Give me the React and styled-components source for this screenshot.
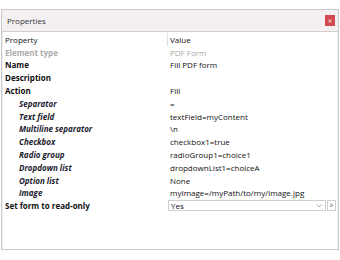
import React from 'react';
import styled, { createGlobalStyle } from 'styled-components';

const GlobalStyle = createGlobalStyle`
  body {
    margin: 0;
    background: #ffffff;
    font-family: "Open Sans", "Noto Sans", sans-serif;
  }
`;

const Window = styled.div`
  margin: 9px 0 0 1px;
  width: 338px;
  height: 241px;
  box-sizing: border-box;
  border: 1px solid #c9c9c9;
  display: flex;
  flex-direction: column;
  background: #f4f0f2;
`;

const TitleBar = styled.div`
  height: 21px;
  display: flex;
  align-items: center;
  justify-content: space-between;
  padding: 0 3px 0 5px;
  border-bottom: 1px solid #d4d0d2;
`;

const Title = styled.span`
  font-size: 8px;
  color: #333;
`;

const CloseButton = styled.button`
  width: 10px;
  height: 11px;
  padding: 0;
  border: none;
  background: #d24a4f;
  color: #fff;
  font-size: 6px;
  line-height: 11px;
  font-family: "DejaVu Sans", sans-serif;
`;

const Grid = styled.div`
  flex: 1;
  background: #fff;
  margin: 0 1px;
  padding-top: 1px;
  display: grid;
  grid-template-columns: 164px 1fr;
  grid-auto-rows: 12.8px;
  align-content: start;
`;

const Cell = styled.div`
  display: flex;
  align-items: center;
  font-size: 8px;
  white-space: nowrap;
  overflow: hidden;
  color: ${({ $muted }) => ($muted ? '#a9a9a9' : '#111')};
`;

const LabelCell = styled(Cell)`
  padding-left: ${({ $sub }) => ($sub ? '16px' : '2px')};
  font-weight: ${({ $header }) => ($header ? 400 : 700)};
  font-style: ${({ $sub }) => ($sub ? 'italic' : 'normal')};
  color: ${({ $muted, $sub }) => ($muted ? '#ababab' : $sub ? '#1c1c30' : '#111')};
`;

const ValueCell = styled(Cell)`
  padding-left: ${({ $control }) => ($control ? '0' : '2px')};
  border-left: ${({ $header }) => ($header ? '1px solid #e2e2e2' : '1px solid transparent')};
`;

const SelectRow = styled.div`
  display: flex;
  align-items: center;
  gap: 1px;
  width: 168px;
`;

const Select = styled.div`
  flex: 1;
  height: 11px;
  box-sizing: border-box;
  border: 1px solid #cfcfcf;
  display: flex;
  align-items: center;
  justify-content: space-between;
  padding: 0 3px 0 2px;
  font-size: 8px;
  color: #111;
`;

const NextButton = styled.div`
  width: 9px;
  height: 11px;
  box-sizing: border-box;
  border: 1px solid #cfcfcf;
  font-size: 7px;
  line-height: 9px;
  text-align: center;
  color: #444;
`;

const Chevron = () => (
  <svg width="6" height="4" viewBox="0 0 6 4">
    <path d="M0.5 0.5 L3 3 L5.5 0.5" fill="none" stroke="#999" strokeWidth="0.8" />
  </svg>
);

const rows = [
  { label: 'Element type', value: 'PDF Form', muted: true },
  { label: 'Name', value: 'Fill PDF form' },
  { label: 'Description', value: '' },
  { label: 'Action', value: 'Fill' },
  { label: 'Separator', value: '=', sub: true },
  { label: 'Text field', value: 'textField=myContent', sub: true },
  { label: 'Multiline separator', value: '\\n', sub: true },
  { label: 'Checkbox', value: 'checkbox1=true', sub: true },
  { label: 'Radio group', value: 'radioGroup1=choice1', sub: true },
  { label: 'Dropdown list', value: 'dropdownList1=choiceA', sub: true },
  { label: 'Option list', value: 'None', sub: true },
  { label: 'Image', value: 'myImage=/myPath/to/my/image.jpg', sub: true },
];

export default function App() {
  return (
    <>
      <GlobalStyle />
      <Window>
        <TitleBar>
          <Title>Properties</Title>
          <CloseButton>×</CloseButton>
        </TitleBar>
        <Grid>
          <LabelCell $header>Property</LabelCell>
          <ValueCell $header>Value</ValueCell>
          {rows.map(({ label, value, muted, sub }) => (
            <React.Fragment key={label}>
              <LabelCell $muted={muted} $sub={sub}>{label}</LabelCell>
              <ValueCell $muted={muted}>{value}</ValueCell>
            </React.Fragment>
          ))}
          <LabelCell>Set form to read-only</LabelCell>
          <ValueCell $control>
            <SelectRow>
              <Select>
                <span>Yes</span>
                <Chevron />
              </Select>
              <NextButton>&gt;</NextButton>
            </SelectRow>
          </ValueCell>
        </Grid>
      </Window>
    </>
  );
}
